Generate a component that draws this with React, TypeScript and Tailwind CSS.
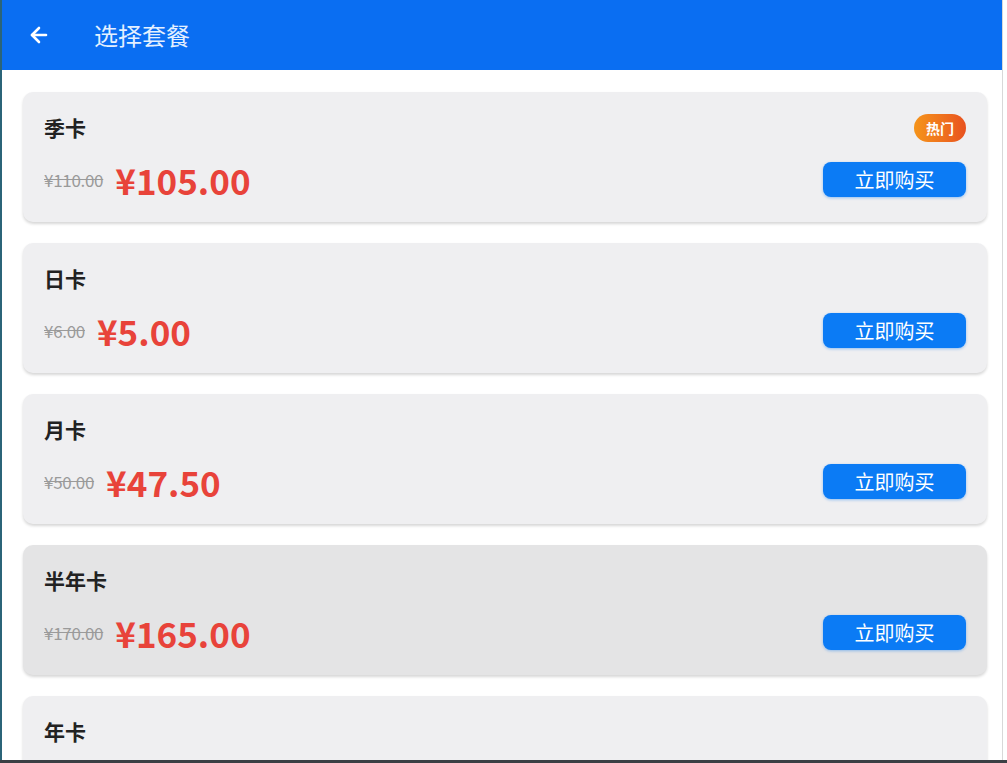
import { ArrowLeft } from 'lucide-react';

type Plan = {
  name: string;
  original: string;
  price: string;
  hot?: boolean;
  active?: boolean;
};

const plans: Plan[] = [
  { name: '季卡', original: '¥110.00', price: '¥105.00', hot: true },
  { name: '日卡', original: '¥6.00', price: '¥5.00' },
  { name: '月卡', original: '¥50.00', price: '¥47.50' },
  { name: '半年卡', original: '¥170.00', price: '¥165.00', active: true },
  { name: '年卡', original: '¥330.00', price: '¥310.00' },
];

const font = { fontFamily: '"Noto Sans CJK SC", "Noto Sans", sans-serif' };

function PlanCard({ plan }: { plan: Plan }) {
  return (
    <div
      className={`shrink-0 h-[130px] rounded-[10px] px-[21px] pt-[22px] shadow-[0_2px_3px_rgba(0,0,0,0.16)] ${
        plan.active ? 'bg-[#e4e4e5]' : 'bg-[#efeff1]'
      }`}
    >
      <div className="flex items-center justify-between h-[28px]">
        <span className="text-[21px] font-bold text-[#222]">{plan.name}</span>
        {plan.hot && (
          <span className="h-[28px] px-[12px] rounded-full bg-gradient-to-r from-[#f5941a] to-[#e8511f] text-white text-[14px] font-bold flex items-center">
            热门
          </span>
        )}
      </div>
      <div className="flex items-center justify-between mt-[20px] h-[35px]">
        <div className="flex items-center gap-[12px]">
          <span className="text-[17px] tracking-[-0.3px] text-[#9a9a9a] line-through">{plan.original}</span>
          <span className="text-[35px] font-bold text-[#e8433a] leading-none">{plan.price}</span>
        </div>
        <button className="w-[143px] h-[35px] rounded-[8px] bg-[#0b7bf5] text-white text-[20px] shadow-[0_1px_3px_rgba(11,123,245,0.4)]">
          立即购买
        </button>
      </div>
    </div>
  );
}

export default function App() {
  return (
    <div className="w-[1007px] h-[763px] bg-white flex flex-col overflow-hidden" style={font}>
      <div className="flex-1 flex min-h-0">
        <div className="w-[1003px] border-l-2 border-[#2b6478] border-r border-r-[#d8d8d8] flex flex-col min-h-0">
          {/* Header */}
          <div className="h-[70px] shrink-0 bg-[#0a6ef2] flex items-center">
            <ArrowLeft className="w-[24px] h-[24px] text-white ml-[25px]" strokeWidth={2.6} />
            <span className="ml-[43px] text-[24px] text-[#e4f0ff]">选择套餐</span>
          </div>
          {/* Plans */}
          <div className="flex-1 min-h-0 overflow-hidden pl-[21px] pr-[15px] pt-[22px] flex flex-col gap-[21px]">
            {plans.map((p) => (
              <PlanCard key={p.name} plan={p} />
            ))}
          </div>
        </div>
        <div className="flex-1 bg-white" />
      </div>
      <div className="h-[3px] shrink-0 bg-[#3b3f44]" />
    </div>
  );
}
